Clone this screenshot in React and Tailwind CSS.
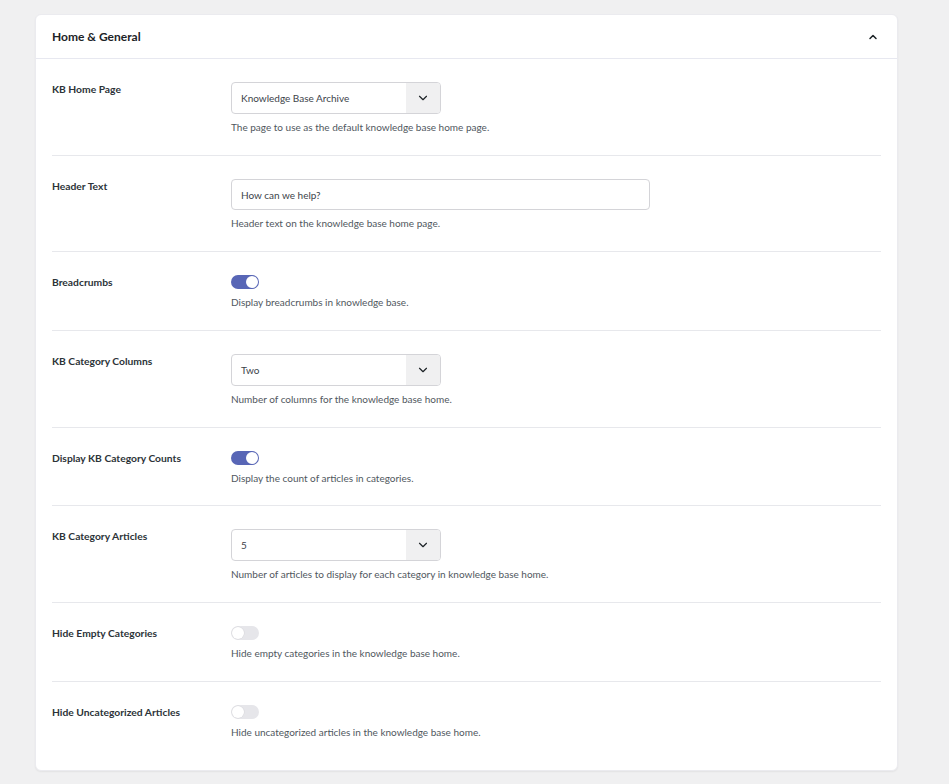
import React, { useState } from "react";
import { ChevronDown, ChevronUp } from "lucide-react";

const Toggle = ({ on }) => (
  <button
    className={`relative w-[28px] h-[14px] rounded-full ${on ? "bg-[#5866b6]" : "bg-[#e6e6ea]"}`}
  >
    <span
      className={`absolute top-[1px] w-[12px] h-[12px] rounded-full bg-white ${on ? "left-[15px]" : "left-[1px] shadow-[0_0_0_0.5px_#d6d6da]"}`}
    />
  </button>
);

const Select = ({ value }) => (
  <div className="flex w-[210px] h-[32px] border border-[#d4d4d8] rounded-[4px] overflow-hidden bg-white">
    <div className="flex-1 flex items-center px-[9px] text-[10px] text-[#3c434a]">{value}</div>
    <div className="w-[34px] flex items-center justify-center bg-[#f0f0f1]">
      <ChevronDown className="w-[14px] h-[14px] text-[#1d2327]" strokeWidth={2} />
    </div>
  </div>
);

const Row = ({ label, children, desc, last, tight }) => (
  <div className={`flex pt-[23px] ${tight ? "pb-[20px]" : "pb-[21px]"} ${last ? "" : "border-b border-[#e7e8ec]"}`}>
    <div className="w-[179px] shrink-0 text-[10.3px] leading-[14px] font-bold text-[#2c3338]">{label}</div>
    <div className="flex flex-col">
      {children}
      <p className="mt-[6px] text-[10px] leading-[14px] text-[#50575e]">{desc}</p>
    </div>
  </div>
);

export default function App() {
  const [open] = useState(true);
  return (
    <div
      className="min-h-screen bg-[#f0f0f1] pt-[14px] pl-[35px] pr-[51px] pb-[14px]"
      style={{ fontFamily: "Lato, 'Noto Sans', sans-serif" }}
    >
      <div className="bg-white rounded-[6px] shadow-[0_1px_2px_rgba(0,0,0,0.06)] border border-[#ebebef]">
        <div className="flex items-center justify-between h-[44px] px-[16px] border-b border-[#e7e8f0]">
          <h2 className="text-[12px] font-bold text-[#1d2327]">Home &amp; General</h2>
          {open && <ChevronUp className="w-[12px] h-[12px] text-[#1d2327] mr-[2px]" strokeWidth={3} />}
        </div>
        <div className="px-[16px] pb-[10px]">
          <Row label="KB Home Page" desc="The page to use as the default knowledge base home page.">
            <Select value="Knowledge Base Archive" />
          </Row>
          <Row label="Header Text" desc="Header text on the knowledge base home page.">
            <input
              defaultValue="How can we help?"
              className="w-[419px] h-[31px] border border-[#d4d4d8] rounded-[4px] px-[9px] text-[10px] text-[#3c434a] outline-none"
            />
          </Row>
          <Row label="Breadcrumbs" desc="Display breadcrumbs in knowledge base.">
            <Toggle on />
          </Row>
          <Row label="KB Category Columns" desc="Number of columns for the knowledge base home.">
            <Select value="Two" />
          </Row>
          <Row label="Display KB Category Counts" desc="Display the count of articles in categories." tight>
            <Toggle on />
          </Row>
          <Row label="KB Category Articles" desc="Number of articles to display for each category in knowledge base home.">
            <Select value="5" />
          </Row>
          <Row label="Hide Empty Categories" desc="Hide empty categories in the knowledge base home.">
            <Toggle />
          </Row>
          <Row label="Hide Uncategorized Articles" desc="Hide uncategorized articles in the knowledge base home." last>
            <Toggle />
          </Row>
        </div>
      </div>
    </div>
  );
}
